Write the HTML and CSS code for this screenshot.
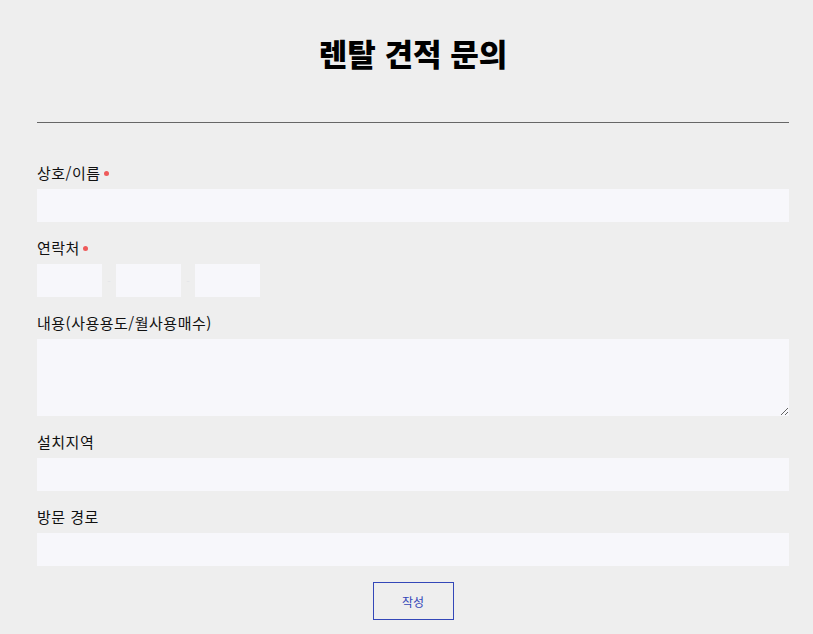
FILE: index.html
```html
<!DOCTYPE html>
<html lang="ko">
<head>
    <meta charset="UTF-8">
    <meta name="viewport" content="width=device-width, initial-scale=1.0">
    <title>렌탈 견적 문의</title>
    <link rel="stylesheet" href="styles.css">
</head>
<body>
    <section class="inquiry">
        <h1 class="inquiry-title">렌탈 견적 문의</h1>

        <form class="inquiry-form" onsubmit="return false;">
            <div class="field">
                <label class="field-label required" for="name">상호/이름</label>
                <input type="text" id="name" class="field-input">
            </div>

            <div class="field">
                <label class="field-label required" for="tel1">연락처</label>
                <div class="tel-row">
                    <input type="text" id="tel1" class="field-input tel-input">
                    <span class="tel-dash">-</span>
                    <input type="text" class="field-input tel-input">
                    <span class="tel-dash">-</span>
                    <input type="text" class="field-input tel-input">
                </div>
            </div>

            <div class="field">
                <label class="field-label" for="content">내용(사용용도/월사용매수)</label>
                <textarea id="content" class="field-input field-textarea"></textarea>
            </div>

            <div class="field">
                <label class="field-label" for="area">설치지역</label>
                <input type="text" id="area" class="field-input">
            </div>

            <div class="field">
                <label class="field-label" for="route">방문 경로</label>
                <input type="text" id="route" class="field-input">
            </div>

            <div class="form-actions">
                <button type="submit" class="submit-btn">작성</button>
            </div>
        </form>
    </section>
</body>
</html>
```

FILE: styles.css
```css
* {margin:0;padding:0;box-sizing:border-box;font-family:"Noto Sans CJK KR", "Noto Sans", sans-serif;}
body {background-color:#eeeeee;color:#111;}
.inquiry {margin:0 24px 0 37px;padding:33px 0 40px;}
.inquiry-title {text-align:center;font-size:31px;font-weight:900;line-height:40px;color:#000;padding-bottom:49px;border-bottom:1px solid #666;margin-bottom:40px;}
.inquiry-form {display:flex;flex-direction:column;gap:16px;}
.field {display:flex;flex-direction:column;gap:6px;}
.field-label {font-size:15px;letter-spacing:0.5px;line-height:20px;color:#111;display:flex;align-items:center;}
.field-label.required::after {content:"";width:5px;height:5px;border-radius:50%;background-color:#ee5a5a;margin-left:3px;}
.field-input {display:block;width:100%;height:33px;border:none;background-color:#f7f7fb;padding:0 10px;font-size:14px;outline:none;}
.field-textarea {height:77px;padding:8px 10px;resize:vertical;}
.tel-row {display:flex;align-items:center;}
.tel-input {width:65px;}
.tel-dash {width:14px;text-align:center;font-size:10px;color:#e4e4e8;}
.form-actions {display:flex;justify-content:center;}
.submit-btn {width:81px;height:38px;background:transparent;border:1px solid #3347b8;color:#3347b8;font-size:12px;cursor:pointer;}
```
